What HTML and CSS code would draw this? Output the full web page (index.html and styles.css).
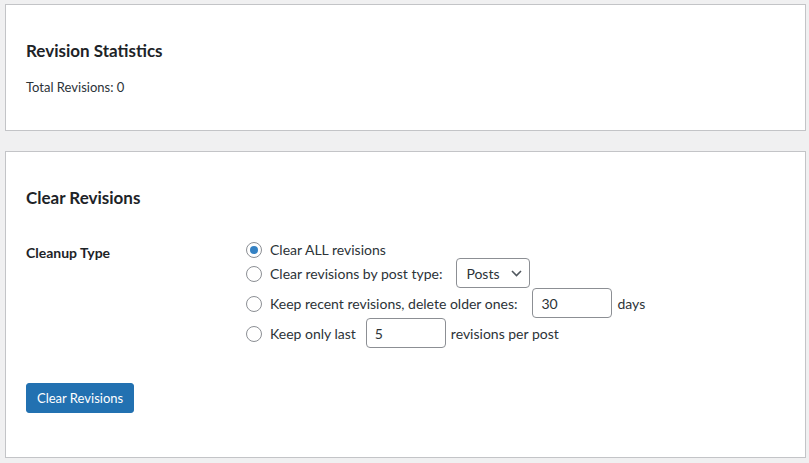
FILE: index.html
```html
<!DOCTYPE html>
<html lang="en">
<head>
<meta charset="utf-8">
<title>Revisions</title>
<link rel="stylesheet" href="styles.css">
</head>
<body>
<div class="wrap">
  <div class="card card-stats">
    <h2 class="card-title">Revision Statistics</h2>
    <p class="stat">Total Revisions: 0</p>
  </div>

  <div class="card card-clear">
    <h2 class="card-title">Clear Revisions</h2>
    <div class="form-row">
      <div class="row-label">Cleanup Type</div>
      <fieldset class="options">
        <label class="opt opt-first"><input type="radio" class="radio" name="cleanup" checked><span class="opt-text">Clear ALL revisions</span></label>
        <label class="opt"><input type="radio" class="radio" name="cleanup"><span class="opt-text">Clear revisions by post type:</span>
          <span class="select-wrap gap-select">
            <select class="select"><option>Posts</option></select>
            <svg class="chevron" width="11" height="7" viewBox="0 0 11 7"><polyline points="1,1 5.5,5.5 10,1" fill="none" stroke="#50575e" stroke-width="1.6"/></svg>
          </span>
        </label>
        <label class="opt"><input type="radio" class="radio" name="cleanup"><span class="opt-text">Keep recent revisions, delete older ones:</span>
          <input type="text" class="text-input gap-days" value="30"><span class="opt-text after">days</span>
        </label>
        <label class="opt"><input type="radio" class="radio" name="cleanup"><span class="opt-text">Keep only last</span>
          <input type="text" class="text-input gap-last" value="5"><span class="opt-text after">revisions per post</span>
        </label>
      </fieldset>
    </div>
    <button class="button-primary" type="button">Clear Revisions</button>
  </div>
</div>
</body>
</html>
```

FILE: styles.css
```css
* { box-sizing: border-box; }

body {
  margin: 0;
  background: #f0f0f1;
  font-family: Lato, "Liberation Sans", sans-serif;
  color: #3c434a;
}

.wrap {
  padding: 4px 3px 0 5px;
}

.card {
  background: #fff;
  border: 1px solid #c3c4c7;
  padding: 35px 20px 33px;
}

.card-title {
  margin: 0;
  font-size: 17px;
  line-height: 22px;
  font-weight: 700;
  color: #1d2327;
}

.stat {
  margin: 15px 0 0;
  font-size: 13px;
  line-height: 20px;
  color: #2c3338;
}

.card-clear {
  margin-top: 20px;
  padding-bottom: 44px;
}

.form-row {
  display: grid;
  grid-template-columns: 220px 1fr;
  margin-top: 31px;
}

.row-label {
  padding-top: 3px;
  font-size: 14px;
  line-height: 20px;
  font-weight: 700;
  color: #1d2327;
}

.options {
  border: 0;
  margin: 0;
  padding: 0;
  display: flex;
  flex-direction: column;
  min-width: 0;
}

.opt {
  display: flex;
  align-items: center;
  height: 30px;
  font-size: 14px;
  color: #2c3338;
}

.opt-first {
  height: 18px;
}

.radio {
  appearance: none;
  -webkit-appearance: none;
  width: 16px;
  height: 16px;
  margin: 0 8px 0 0;
  border: 1px solid #8c8f94;
  border-radius: 50%;
  background: #fff;
  position: relative;
  top: 1px;
  flex: none;
}

.radio:checked::before {
  content: "";
  position: absolute;
  left: 3px;
  top: 3px;
  width: 8px;
  height: 8px;
  border-radius: 50%;
  background: #3582c4;
}

.opt-text {
  white-space: nowrap;
}

.select-wrap {
  position: relative;
  display: inline-flex;
}

.gap-select { margin-left: 14px; }

.select {
  appearance: none;
  -webkit-appearance: none;
  width: 74px;
  height: 30px;
  border: 1px solid #8c8f94;
  border-radius: 4px;
  padding: 0 24px 0 9px;
  background: #fff;
  font-family: inherit;
  font-size: 14px;
  color: #2c3338;
}

.chevron {
  position: absolute;
  right: 8px;
  top: 12px;
}

.text-input {
  width: 80px;
  height: 30px;
  border: 1px solid #8c8f94;
  border-radius: 4px;
  padding: 0 8px;
  background: #fff;
  font-family: inherit;
  font-size: 14px;
  color: #2c3338;
  flex: none;
}

.gap-days { margin-left: 15px; }
.gap-last { margin-left: 10px; }

.after { margin-left: 5px; }

.button-primary {
  display: block;
  margin-top: 35px;
  height: 30px;
  padding: 0 10px;
  background: #2271b1;
  border: 1px solid #2271b1;
  border-radius: 3px;
  color: #fff;
  font-family: inherit;
  font-size: 13px;
  line-height: 28px;
}
```
